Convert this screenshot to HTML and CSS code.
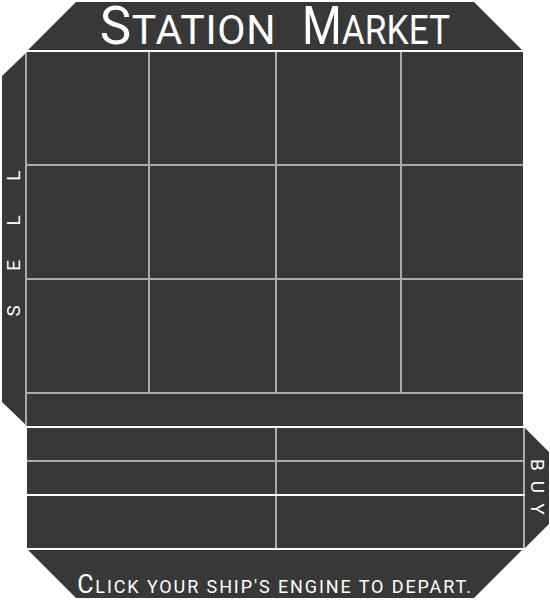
FILE: index.html
```html
<!DOCTYPE html>
<html lang="en">
<head>
<meta charset="utf-8">
<title>Station Market</title>
<link rel="stylesheet" href="styles.css">
</head>
<body>
<div class="app">
  <header class="banner banner-top">
    <h1 class="title"><span class="word word-station"><span class="cap">S</span>tation</span> <span class="word word-market"><span class="cap">M</span>arket</span></h1>
  </header>
  <div class="middle">
    <aside class="sell"><span class="side-label sell-label">SELL</span></aside>
    <section class="market">
      <div class="cell"></div><div class="cell"></div><div class="cell"></div><div class="cell"></div>
      <div class="cell"></div><div class="cell"></div><div class="cell"></div><div class="cell"></div>
      <div class="cell"></div><div class="cell"></div><div class="cell"></div><div class="cell"></div>
      <div class="cell strip"></div>
    </section>
  </div>
  <div class="lower">
    <div class="trade">
      <div class="trade-group">
        <div class="cell"></div><div class="cell"></div>
        <div class="cell"></div><div class="cell"></div>
      </div>
      <div class="trade-group">
        <div class="cell"></div><div class="cell"></div>
      </div>
    </div>
    <aside class="buy"><span class="side-label buy-label">BUY</span></aside>
  </div>
  <footer class="banner banner-bottom">
    <p class="hint"><span class="cap">C</span>lick your ship's engine to depart.</p>
  </footer>
</div>
</body>
</html>
```
FILE: styles.css
```css
* { box-sizing: border-box; }

html, body {
  margin: 0;
  background: #fff;
}

.app {
  width: 550px;
  height: 600px;
  padding-top: 2px;
  font-family: "Roboto", "Liberation Sans", sans-serif;
  color: #fff;
  overflow: hidden;
}

.banner {
  width: 494px;
  height: 48px;
  margin-left: 28px;
  background: #383838;
  display: flex;
  justify-content: center;
}

.banner-top {
  align-items: flex-start;
  clip-path: polygon(48px 0, 446px 0, 494px 48px, 0 48px);
}

.banner-bottom {
  margin-top: 2px;
  align-items: flex-start;
  clip-path: polygon(0 0, 494px 0, 446px 48px, 48px 48px);
}

.title {
  margin: 0;
  padding-top: 2px;
  font-size: 41px;
  line-height: 44px;
  font-weight: 400;
  text-transform: uppercase;
  white-space: pre;
  display: flex;
  column-gap: 26px;
  height: 48px;
}

.title .cap { font-size: 53px; line-height: 44px; }

.word { display: inline-block; }

.word-station { letter-spacing: 0.7px; }

.word-market {
  transform: scaleX(0.86);
  transform-origin: left center;
  margin-right: -24px;
}

.hint {
  margin: 0;
  padding-top: 21px;
  font-size: 18px;
  line-height: 27px;
  font-weight: 400;
  text-transform: uppercase;
  letter-spacing: 1.9px;
  white-space: pre;
}

.hint .cap { font-size: 25px; }

.middle {
  display: flex;
  margin-top: 2px;
  padding-left: 2px;
}

.sell {
  width: 25px;
  height: 374px;
  background: #383838;
  border-right: 2px solid #aaa;
  clip-path: polygon(25px 0, 25px 374px, 0 350px, 0 24px);
  display: flex;
  align-items: center;
  justify-content: center;
}

.side-label {
  writing-mode: vertical-rl;
  font-size: 19px;
  line-height: 1;
  font-weight: 400;
}

.sell-label {
  transform: rotate(180deg);
  letter-spacing: 34.5px;
  margin-bottom: 26px;
}

.market {
  width: 496px;
  height: 374px;
  background: #aaa;
  display: grid;
  grid-template-columns: 121px 125px 123px 121px;
  grid-auto-rows: 112px;
  gap: 2px;
}

.cell { background: #383838; }

.strip {
  grid-column: 1 / -1;
  height: 32px;
}

.lower {
  display: flex;
  margin-top: 2px;
  padding-left: 27px;
}

.trade {
  width: 498px;
  display: flex;
  flex-direction: column;
  gap: 2px;
}

.trade-group {
  width: 498px;
  background: #aaa;
  padding-right: 2px;
  display: grid;
  grid-template-columns: 248px 246px;
  grid-auto-rows: 32px;
  gap: 2px;
}

.trade-group:last-child { grid-auto-rows: 52px; }

.buy {
  width: 24px;
  height: 120px;
  background: #383838;
  clip-path: polygon(0 0, 24px 24px, 24px 96px, 0 120px);
  display: flex;
  align-items: center;
  justify-content: center;
}

.buy-label {
  letter-spacing: 10px;
  margin-top: 8px;
}
```
